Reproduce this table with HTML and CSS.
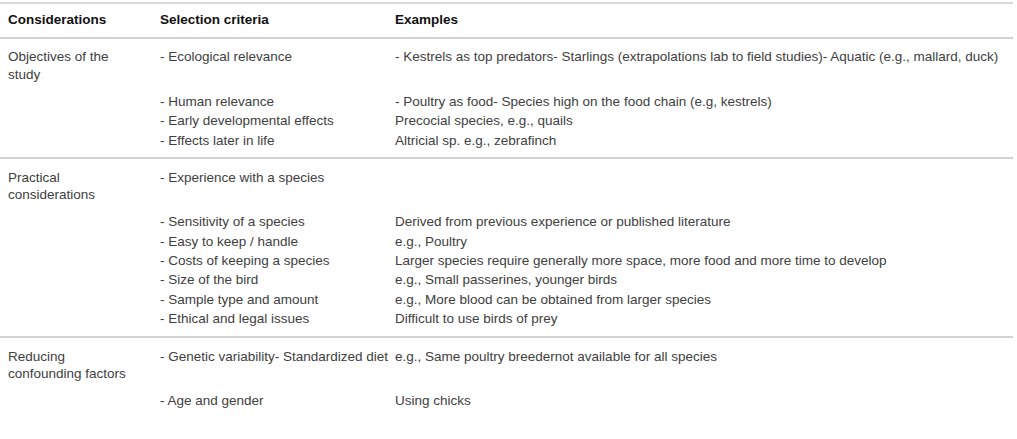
FILE: index.html
```html
<!DOCTYPE html>
<html lang="en">
<head>
<meta charset="utf-8">
<title>Species selection considerations</title>
<link rel="stylesheet" href="styles.css">
</head>
<body>
<div class="table">
  <div class="row head">
    <div class="c1">Considerations</div>
    <div class="c2">Selection criteria</div>
    <div class="c3">Examples</div>
  </div>

  <div class="group">
    <div class="row first">
      <div class="c1">Objectives of the study</div>
      <div class="c2">- Ecological relevance</div>
      <div class="c3">- Kestrels as top predators- Starlings (extrapolations lab to field studies)- Aquatic (e.g., mallard, duck)</div>
    </div>
    <div class="row">
      <div class="c1"></div>
      <div class="c2">- Human relevance</div>
      <div class="c3">- Poultry as food- Species high on the food chain (e.g, kestrels)</div>
    </div>
    <div class="row">
      <div class="c1"></div>
      <div class="c2">- Early developmental effects</div>
      <div class="c3">Precocial species, e.g., quails</div>
    </div>
    <div class="row">
      <div class="c1"></div>
      <div class="c2">- Effects later in life</div>
      <div class="c3">Altricial sp. e.g., zebrafinch</div>
    </div>
  </div>

  <div class="group">
    <div class="row first">
      <div class="c1">Practical considerations</div>
      <div class="c2">- Experience with a species</div>
      <div class="c3"></div>
    </div>
    <div class="row">
      <div class="c1"></div>
      <div class="c2">- Sensitivity of a species</div>
      <div class="c3">Derived from previous experience or published literature</div>
    </div>
    <div class="row">
      <div class="c1"></div>
      <div class="c2">- Easy to keep / handle</div>
      <div class="c3">e.g., Poultry</div>
    </div>
    <div class="row">
      <div class="c1"></div>
      <div class="c2">- Costs of keeping a species</div>
      <div class="c3">Larger species require generally more space, more food and more time to develop</div>
    </div>
    <div class="row">
      <div class="c1"></div>
      <div class="c2">- Size of the bird</div>
      <div class="c3">e.g., Small passerines, younger birds</div>
    </div>
    <div class="row">
      <div class="c1"></div>
      <div class="c2">- Sample type and amount</div>
      <div class="c3">e.g., More blood can be obtained from larger species</div>
    </div>
    <div class="row">
      <div class="c1"></div>
      <div class="c2">- Ethical and legal issues</div>
      <div class="c3">Difficult to use birds of prey</div>
    </div>
  </div>

  <div class="group">
    <div class="row first">
      <div class="c1">Reducing confounding factors</div>
      <div class="c2">- Genetic variability- Standardized diet</div>
      <div class="c3">e.g., Same poultry breedernot available for all species</div>
    </div>
    <div class="row">
      <div class="c1"></div>
      <div class="c2">- Age and gender</div>
      <div class="c3">Using chicks</div>
    </div>
  </div>
</div>
</body>
</html>
```

FILE: styles.css
```css
html, body {
  margin: 0;
  padding: 0;
  background: #ffffff;
}

body {
  font-family: "Liberation Sans", Arial, Helvetica, sans-serif;
  font-size: 13.5px;
  line-height: 17.4px;
  color: #404040;
}

.table {
  width: 1013px;
  margin-top: 2px;
  border-top: 2px solid #d8d8d8;
}

.row {
  display: grid;
  grid-template-columns: 152px 235px 1fr;
  padding-left: 8px;
}

.row > div {
  padding: 1px 0;
  white-space: nowrap;
}

.row .c1 {
  white-space: normal;
  padding-right: 28px;
}

.head {
  padding-top: 6px;
  padding-bottom: 7.5px;
}

.head > div {
  font-weight: bold;
  color: #111111;
}

.group {
  border-top: 2px solid #d2d2d2;
  padding-top: 8.5px;
  padding-bottom: 7.5px;
}

.row.first > div {
  padding-bottom: 8.5px;
}
```
